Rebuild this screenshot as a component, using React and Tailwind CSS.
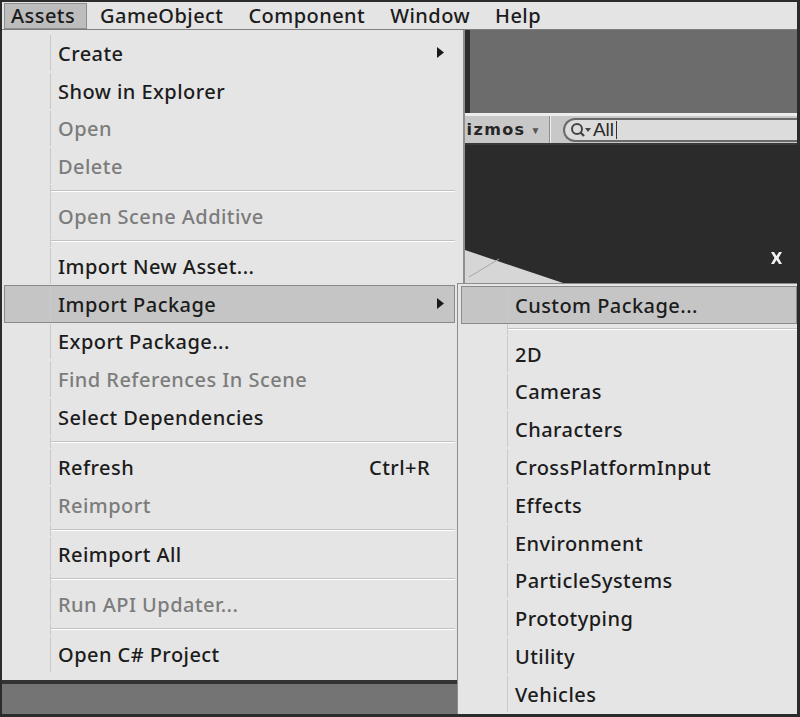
import React from 'react';

const leftItems = [
  { label: 'Create', arrow: true },
  { label: 'Show in Explorer' },
  { label: 'Open', disabled: true },
  { label: 'Delete', disabled: true },
  'sep',
  { label: 'Open Scene Additive', disabled: true },
  'sep',
  { label: 'Import New Asset...' },
  { label: 'Import Package', arrow: true, active: true },
  { label: 'Export Package...' },
  { label: 'Find References In Scene', disabled: true },
  { label: 'Select Dependencies' },
  'sep',
  { label: 'Refresh', shortcut: 'Ctrl+R' },
  { label: 'Reimport', disabled: true },
  'sep',
  { label: 'Reimport All' },
  'sep',
  { label: 'Run API Updater...', disabled: true },
  'sep',
  { label: 'Open C# Project' },
];

const subItems = [
  { label: 'Custom Package...', active: true },
  'sep',
  { label: '2D' },
  { label: 'Cameras' },
  { label: 'Characters' },
  { label: 'CrossPlatformInput' },
  { label: 'Effects' },
  { label: 'Environment' },
  { label: 'ParticleSystems' },
  { label: 'Prototyping' },
  { label: 'Utility' },
  { label: 'Vehicles' },
];

const menuBar = ['Assets', 'GameObject', 'Component', 'Window', 'Help'];

// small black right-pointing triangle used for submenus
const Arrow = () => (
  <svg width="7" height="11" viewBox="0 0 7 11" className="ml-auto mr-[10px]">
    <path d="M0 0 L7 5.5 L0 11 Z" fill="#1a1a1a" />
  </svg>
);

const MenuRow = ({ item }) => (
  <div
    className={`flex h-[37.8px] items-center border ${
      item.active ? 'border-[#8a8a8a] bg-[#c5c5c5]' : 'border-transparent'
    }`}
  >
    <div className="h-full w-[46px] shrink-0 border-r border-[#c9c9c9]" />
    <span className={`pl-[7px] pt-[2px] ${item.disabled ? 'text-[#7c7c7c]' : 'text-[#1c1c1c]'}`}>{item.label}</span>
    {item.arrow && <Arrow />}
    {item.shortcut && <span className="ml-auto mr-[24px] pt-[2px] text-[#1c1c1c]">{item.shortcut}</span>}
  </div>
);

const Separator = ({ h = 'h-[12px]' }) => (
  <div className={`flex ${h} items-center`}>
    <div className="h-full w-[47px] shrink-0 border-r border-[#c9c9c9]" />
    <div className="h-[2px] flex-1 border-t border-b border-t-[#c2c2c2] border-b-white" />
  </div>
);

export default function App() {
  return (
    <div className="relative h-[717px] w-[800px] overflow-hidden border-[2px] border-r-[3px] border-b-[3px] border-[#2b2b2b] bg-[#2b2b2b] font-['Noto_Sans',sans-serif] text-[20px] font-medium leading-none tracking-[0.45px]">
      <div className="flex h-full flex-col">
        {/* top menu bar */}
        <div className="flex h-[28px] shrink-0 items-center gap-[6px] border-b border-[#7e7e7e] bg-[#e4e4e4] pl-[2px] text-[#1c1c1c]">
          {menuBar.map((m, i) => (
            <div
              key={m}
              className={`flex h-[26px] items-center pl-[6px] pr-[11px] pt-[1px] ${
                i === 0 ? 'border border-[#8e8e8e] bg-[#bdbdbd]' : 'border border-transparent'
              }`}
            >
              {m}
            </div>
          ))}
        </div>

        {/* editor behind the menus */}
        <div className="flex min-h-0 flex-1">
          <div className="w-[463px] shrink-0 bg-[#747474]" />
          <div className="flex min-w-0 flex-1 flex-col">
            <div className="flex h-[83px] shrink-0 bg-[#6c6c6c]">
              <div className="w-[5px] bg-[#2f2f2f]" />
            </div>
            <div className="flex h-[32px] shrink-0 items-center border-t-[3px] border-b-[2px] border-t-[#ededed] border-b-[#3a3a3a] bg-[#c8c8c8]">
              <span className="ml-[-13px] font-['DejaVu_Sans',sans-serif] text-[16px] font-bold tracking-[1.4px] text-[#262626]">Gizmos</span>
              <span className="ml-[5px] text-[10px] text-[#555]">▼</span>
              <div className="ml-[8px] h-full w-[2px] border-l border-r border-l-[#8e8e8e] border-r-[#f0f0f0]" />
              <div className="ml-[12px] flex h-[24px] flex-1 items-center rounded-l-full border-[2px] border-r-0 border-[#6a6a6a] bg-[#dcdcdc] pl-[5px]">
                <svg width="22" height="16" viewBox="0 0 22 16">
                  <circle cx="7" cy="7" r="5" fill="none" stroke="#444" strokeWidth="2" />
                  <path d="M10.5 10.5 L14 14" stroke="#444" strokeWidth="2.4" />
                  <path d="M15 6 L21 6 L18 10 Z" fill="#444" />
                </svg>
                <span className="ml-[1px] font-['Liberation_Sans',sans-serif] text-[19px] font-normal tracking-normal text-[#2a2a2a]">All</span>
                <div className="ml-[2px] h-[18px] w-px bg-[#333]" />
              </div>
            </div>
            <div className="relative flex-1 bg-[#2b2b2b]">
              <svg className="absolute left-0 top-0" width="333" height="140" viewBox="0 0 333 140">
                <path d="M0 105 L104 140 L0 140 Z" fill="#d6d6d6" />
                <path d="M4 132 L34 114" stroke="#a8a8a8" strokeWidth="1" />
                <path d="M306 107 L309 107 L311.5 111 L314 107 L317 107 L313.5 113 L317 119 L314 119 L311.5 115 L309 119 L306 119 L309.5 113 Z" fill="#f2f2f2" />
              </svg>
            </div>
          </div>
        </div>
      </div>

      {/* Assets dropdown */}
      <div className="absolute left-0 top-[28px] h-[650px] w-[463px] border-r-[2px] border-[#8f8f8f] bg-[#e5e5e5] pt-[4px] shadow-[0_4px_0_#333]">
        <div className="mx-[2px] mr-[8px]">
          {leftItems.map((it, i) => (it === 'sep' ? <Separator key={i} /> : <MenuRow key={i} item={it} />))}
        </div>
      </div>

      {/* Import Package submenu */}
      <div className="absolute left-[455px] top-[281px] h-[433px] w-[341px] border border-[#8c8c8c] bg-[#e5e5e5] pt-[2px]">
        <div className="mx-[3px] mr-0">
          {subItems.map((it, i) =>
            it === 'sep' ? <Separator key={i} h="h-[11px]" /> : <MenuRow key={i} item={it} />
          )}
        </div>
      </div>
    </div>
  );
}
